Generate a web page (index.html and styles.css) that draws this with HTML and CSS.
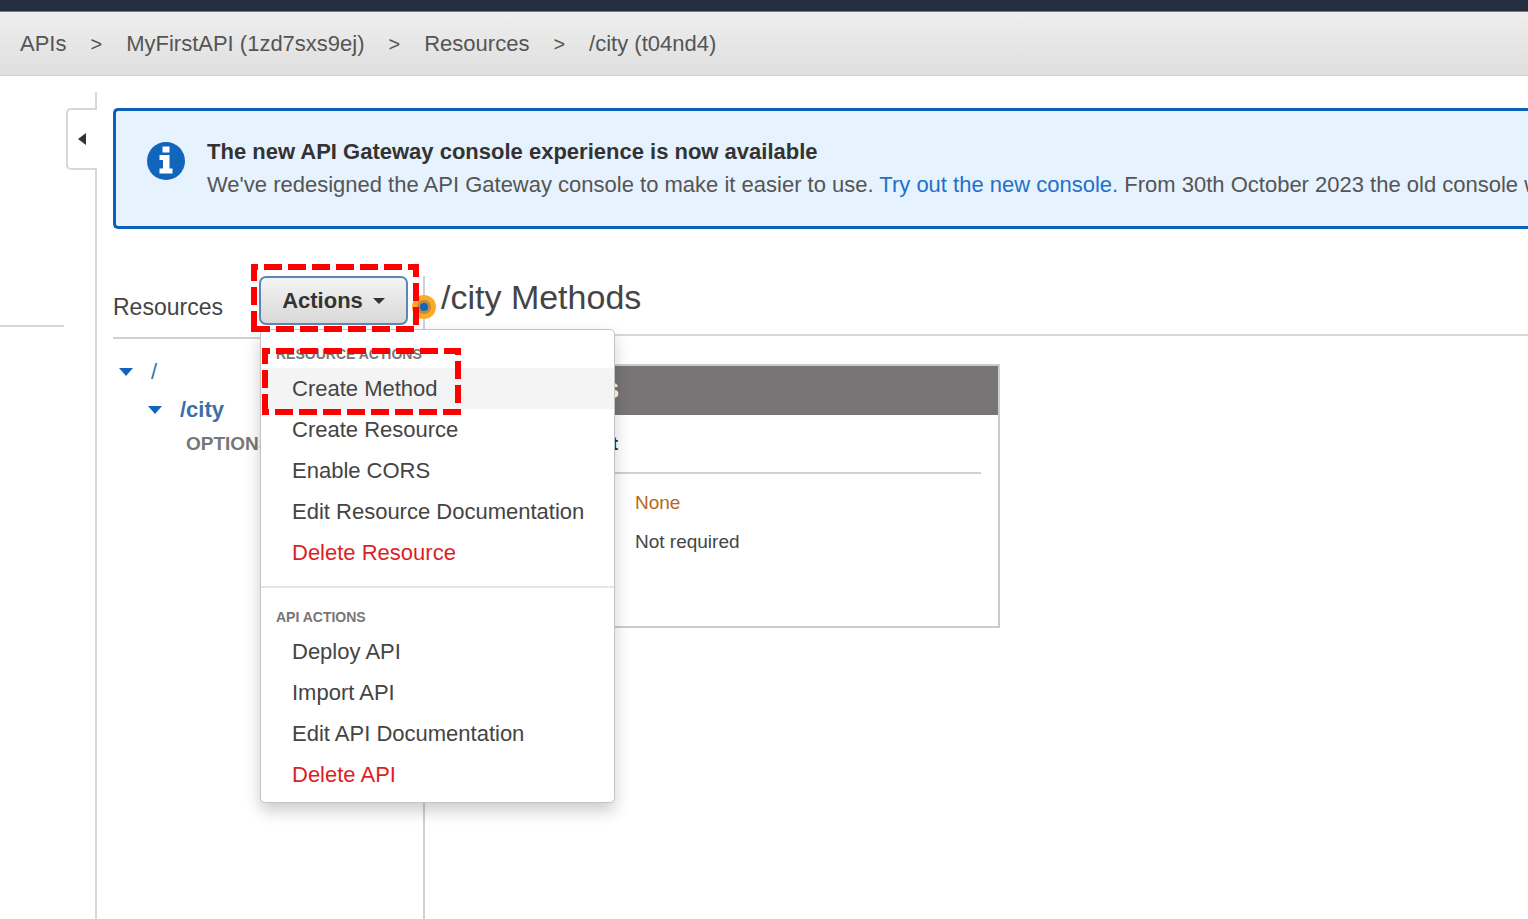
FILE: index.html
```html
<!DOCTYPE html>
<html lang="en">
<head>
<meta charset="utf-8">
<title>API Gateway</title>
<link rel="stylesheet" href="styles.css">
</head>
<body>
<header class="topbar"></header>
<nav class="crumbs" aria-label="Breadcrumb">
  <a href="#">APIs</a><span class="sep">&gt;</span>
  <a href="#">MyFirstAPI (1zd7sxs9ej)</a><span class="sep">&gt;</span>
  <a href="#">Resources</a><span class="sep">&gt;</span>
  <a href="#">/city (t04nd4)</a>
</nav>
<div class="shell">
  <aside class="side">
    <div class="side-edge"></div>
    <button class="collapse" aria-label="Collapse navigation">
      <svg width="8" height="12" viewBox="0 0 8 12"><path d="M8 0V12L0 6Z" fill="#333"/></svg>
    </button>
    <div class="side-body"><hr class="side-rule"></div>
  </aside>
  <main class="main">
    <section class="banner">
      <svg class="info" width="38" height="38" viewBox="0 0 38 38" aria-hidden="true">
        <circle cx="19" cy="19" r="19" fill="#1166bb"/>
        <path d="M15.500 4.500h7v6h-7zM12.500 13H22.500V26.500h3V31.500H12.500v-5H16v-8.500h-3.500z" fill="#fff"/>
      </svg>
      <div class="banner-text">
        <h2>The new API Gateway console experience is now available</h2>
        <p>We've redesigned the API Gateway console to make it easier to use. <a href="#">Try out the new console.</a> From 30th October 2023 the old console w</p>
      </div>
    </section>
    <div class="workspace">
      <section class="resources">
        <div class="res-head">
          <h3>Resources</h3>
          <div class="actions">
            <button class="actions-btn" aria-haspopup="true" aria-expanded="true">Actions
              <svg width="12" height="6" viewBox="0 0 12 6"><path d="M0 0H12L6 6Z" fill="#333"/></svg>
            </button>
            <div class="menu">
              <h4>RESOURCE ACTIONS</h4>
              <ul>
                <li><button class="active">Create Method</button></li>
                <li><button>Create Resource</button></li>
                <li><button>Enable CORS</button></li>
                <li><button>Edit Resource Documentation</button></li>
                <li><button class="danger">Delete Resource</button></li>
              </ul>
              <hr>
              <h4>API ACTIONS</h4>
              <ul>
                <li><button>Deploy API</button></li>
                <li><button>Import API</button></li>
                <li><button>Edit API Documentation</button></li>
                <li><button class="danger">Delete API</button></li>
              </ul>
            </div>
            <svg class="marks" width="212" height="154" viewBox="250 263 212 154" aria-hidden="true">
              <g fill="none" stroke="#f00" stroke-width="6" stroke-dasharray="18 6">
                <path d="M254 329V267H416V329Z"/>
                <path d="M265 412V351H458V412Z"/>
              </g>
            </svg>
          </div>
        </div>
        <ul class="tree">
          <li class="root"><svg width="14" height="8" viewBox="0 0 14 8"><path d="M0 0H14L7 8Z" fill="#1166bb"/></svg><a href="#">/</a></li>
          <li class="node"><svg width="14" height="8" viewBox="0 0 14 8"><path d="M0 0H14L7 8Z" fill="#1166bb"/></svg><a href="#">/city</a></li>
          <li class="leaf"><a href="#">OPTIONS</a></li>
        </ul>
      </section>
      <section class="methods">
        <svg class="handle" width="24" height="24" viewBox="0 0 24 24" aria-hidden="true">
          <circle cx="12" cy="12" r="12" fill="#ffa92b"/>
          <circle cx="12" cy="12" r="7" fill="#b88c43"/>
          <circle cx="12" cy="12" r="4" fill="#1166bb"/>
        </svg>
        <h1>/city Methods</h1>
        <article class="card">
          <h2 class="card-head"><span>OPTIONS</span></h2>
          <div class="card-body">
            <h3><span>Mock Endpoint</span></h3>
            <ul>
              <li class="none">None</li>
              <li>Not required</li>
            </ul>
          </div>
        </article>
      </section>
    </div>
  </main>
</div>
</body>
</html>
```

FILE: styles.css
```css
* { box-sizing: border-box; }
body {
  margin: 0;
  min-height: 100vh;
  display: flex;
  flex-direction: column;
  overflow-x: hidden;
  background: #fff;
  color: #444;
  font: 22px/32px "Liberation Sans", Arial, sans-serif;
}
h1, h2, h3, h4, p, ul { margin: 0; padding: 0; }
ul { list-style: none; }
a { color: inherit; text-decoration: none; }
button { font: inherit; color: inherit; cursor: pointer; }
svg { display: block; flex: none; }

.topbar { height: 12px; background: #232f3e; border-bottom: 1px solid #777c82; }
.crumbs {
  display: flex;
  align-items: center;
  gap: 24px;
  height: 64px;
  padding: 0 20px;
  color: #555;
  background: linear-gradient(#eee, #dfdfdf);
  border-bottom: 1px solid #d2d2d2;
}
.sep { font-size: 20px; }

.shell { flex: 1; display: flex; }
.side { width: 97px; flex: none; display: flex; flex-direction: column; padding-top: 16px; }
.side-edge { height: 16px; border-right: 2px solid #d8d8d8; }
.collapse {
  align-self: flex-end;
  width: 31px;
  height: 62px;
  padding: 0 0 0 10px;
  background: #fff;
  border: 2px solid #d8d8d8;
  border-right: 0;
  border-radius: 5px 0 0 5px;
}
.side-body { flex: 1; border-right: 2px solid #d8d8d8; padding-top: 155px; }
.side-rule { width: 64px; margin: 0; border: 0; border-top: 2px solid #d8d8d8; }

.main { flex: 1; min-width: 0; display: flex; flex-direction: column; padding: 32px 0 0 16px; }
.banner {
  display: flex;
  gap: 22px;
  padding: 24px 0 25px 31px;
  background: #e6f2fe;
  border: 3px solid #0a60bb;
  border-right: 0;
  border-radius: 5px 0 0 5px;
  overflow: hidden;
}
.info { margin-top: 7px; }
.banner-text { flex: 1; min-width: 0; line-height: 33px; white-space: nowrap; }
.banner h2 { font-size: 22px; color: #333; }
.banner p { color: #555; }
.banner a { color: #2470c8; }

.workspace { flex: 1; display: flex; padding-top: 47px; }
.resources { width: 310px; flex: none; }
.res-head {
  display: flex;
  align-items: flex-start;
  justify-content: space-between;
  height: 63px;
  padding-right: 15px;
  border-bottom: 2px solid #d0d0d0;
}
.res-head h3 { font-size: 23px; font-weight: 400; line-height: 32px; padding-top: 15px; }
.actions { position: relative; }
.actions-btn {
  display: flex;
  align-items: center;
  justify-content: center;
  gap: 10px;
  width: 149px;
  height: 49px;
  padding: 0;
  font-weight: 700;
  color: #333;
  background: linear-gradient(#f4f4f4, #d8d8d8);
  border: 2px solid #5b87b8;
  border-radius: 7px;
}
.menu {
  position: absolute;
  z-index: 2;
  top: 53px;
  left: 1px;
  width: 355px;
  padding: 10px 0 7px;
  background: #fff;
  border: 1px solid #c4c4c4;
  border-radius: 5px;
  box-shadow: 0 8px 16px rgba(0, 0, 0, .2);
}
.menu h4 { padding-left: 15px; font-size: 14px; line-height: 28px; color: #777; }
.menu hr { margin: 13px 0 15px; border: 0; border-top: 2px solid #e6e6e6; }
.menu li button {
  display: block;
  width: 100%;
  padding: 0 0 0 31px;
  line-height: 41px;
  text-align: left;
  background: none;
  border: 0;
}
.menu li .active { background: #f4f4f4; }
.menu li .danger { color: #dc1f26; }
.marks { position: absolute; z-index: 3; top: -13px; left: -9px; pointer-events: none; }

.tree li { display: flex; align-items: center; gap: 18px; color: #3a6fa8; }
.tree .root { padding: 14px 0 0 6px; line-height: 38px; }
.tree .node { padding-left: 35px; line-height: 38px; font-weight: 700; }
.tree .leaf { padding-left: 73px; line-height: 30px; font-size: 19px; font-weight: 700; color: #777; }

.methods { position: relative; flex: 1; min-width: 0; border-left: 2px solid #d0d0d0; }
.handle { position: absolute; top: 19px; left: -13px; }
.methods h1 {
  height: 60px;
  padding-left: 16px;
  font-size: 34px;
  line-height: 42px;
  font-weight: 400;
  border-bottom: 2px solid #d8d8d8;
}
.card { width: 559px; margin: 28px 0 0 16px; border: 2px solid #ccc; }
.card-head { padding-left: 77px; font-size: 22px; line-height: 49px; color: #fff; background: #777576; }
.card-body { padding: 0 17px 65px; }
.card-body h3 {
  padding: 12px 0 11px 22px;
  font-size: 19px;
  line-height: 34px;
  color: #16325c;
  border-bottom: 2px solid #d0d0d0;
}
.card-body ul { padding: 9px 0 0 175px; font-size: 19px; line-height: 39px; }
.card-body .none { color: #b8691a; }
```
